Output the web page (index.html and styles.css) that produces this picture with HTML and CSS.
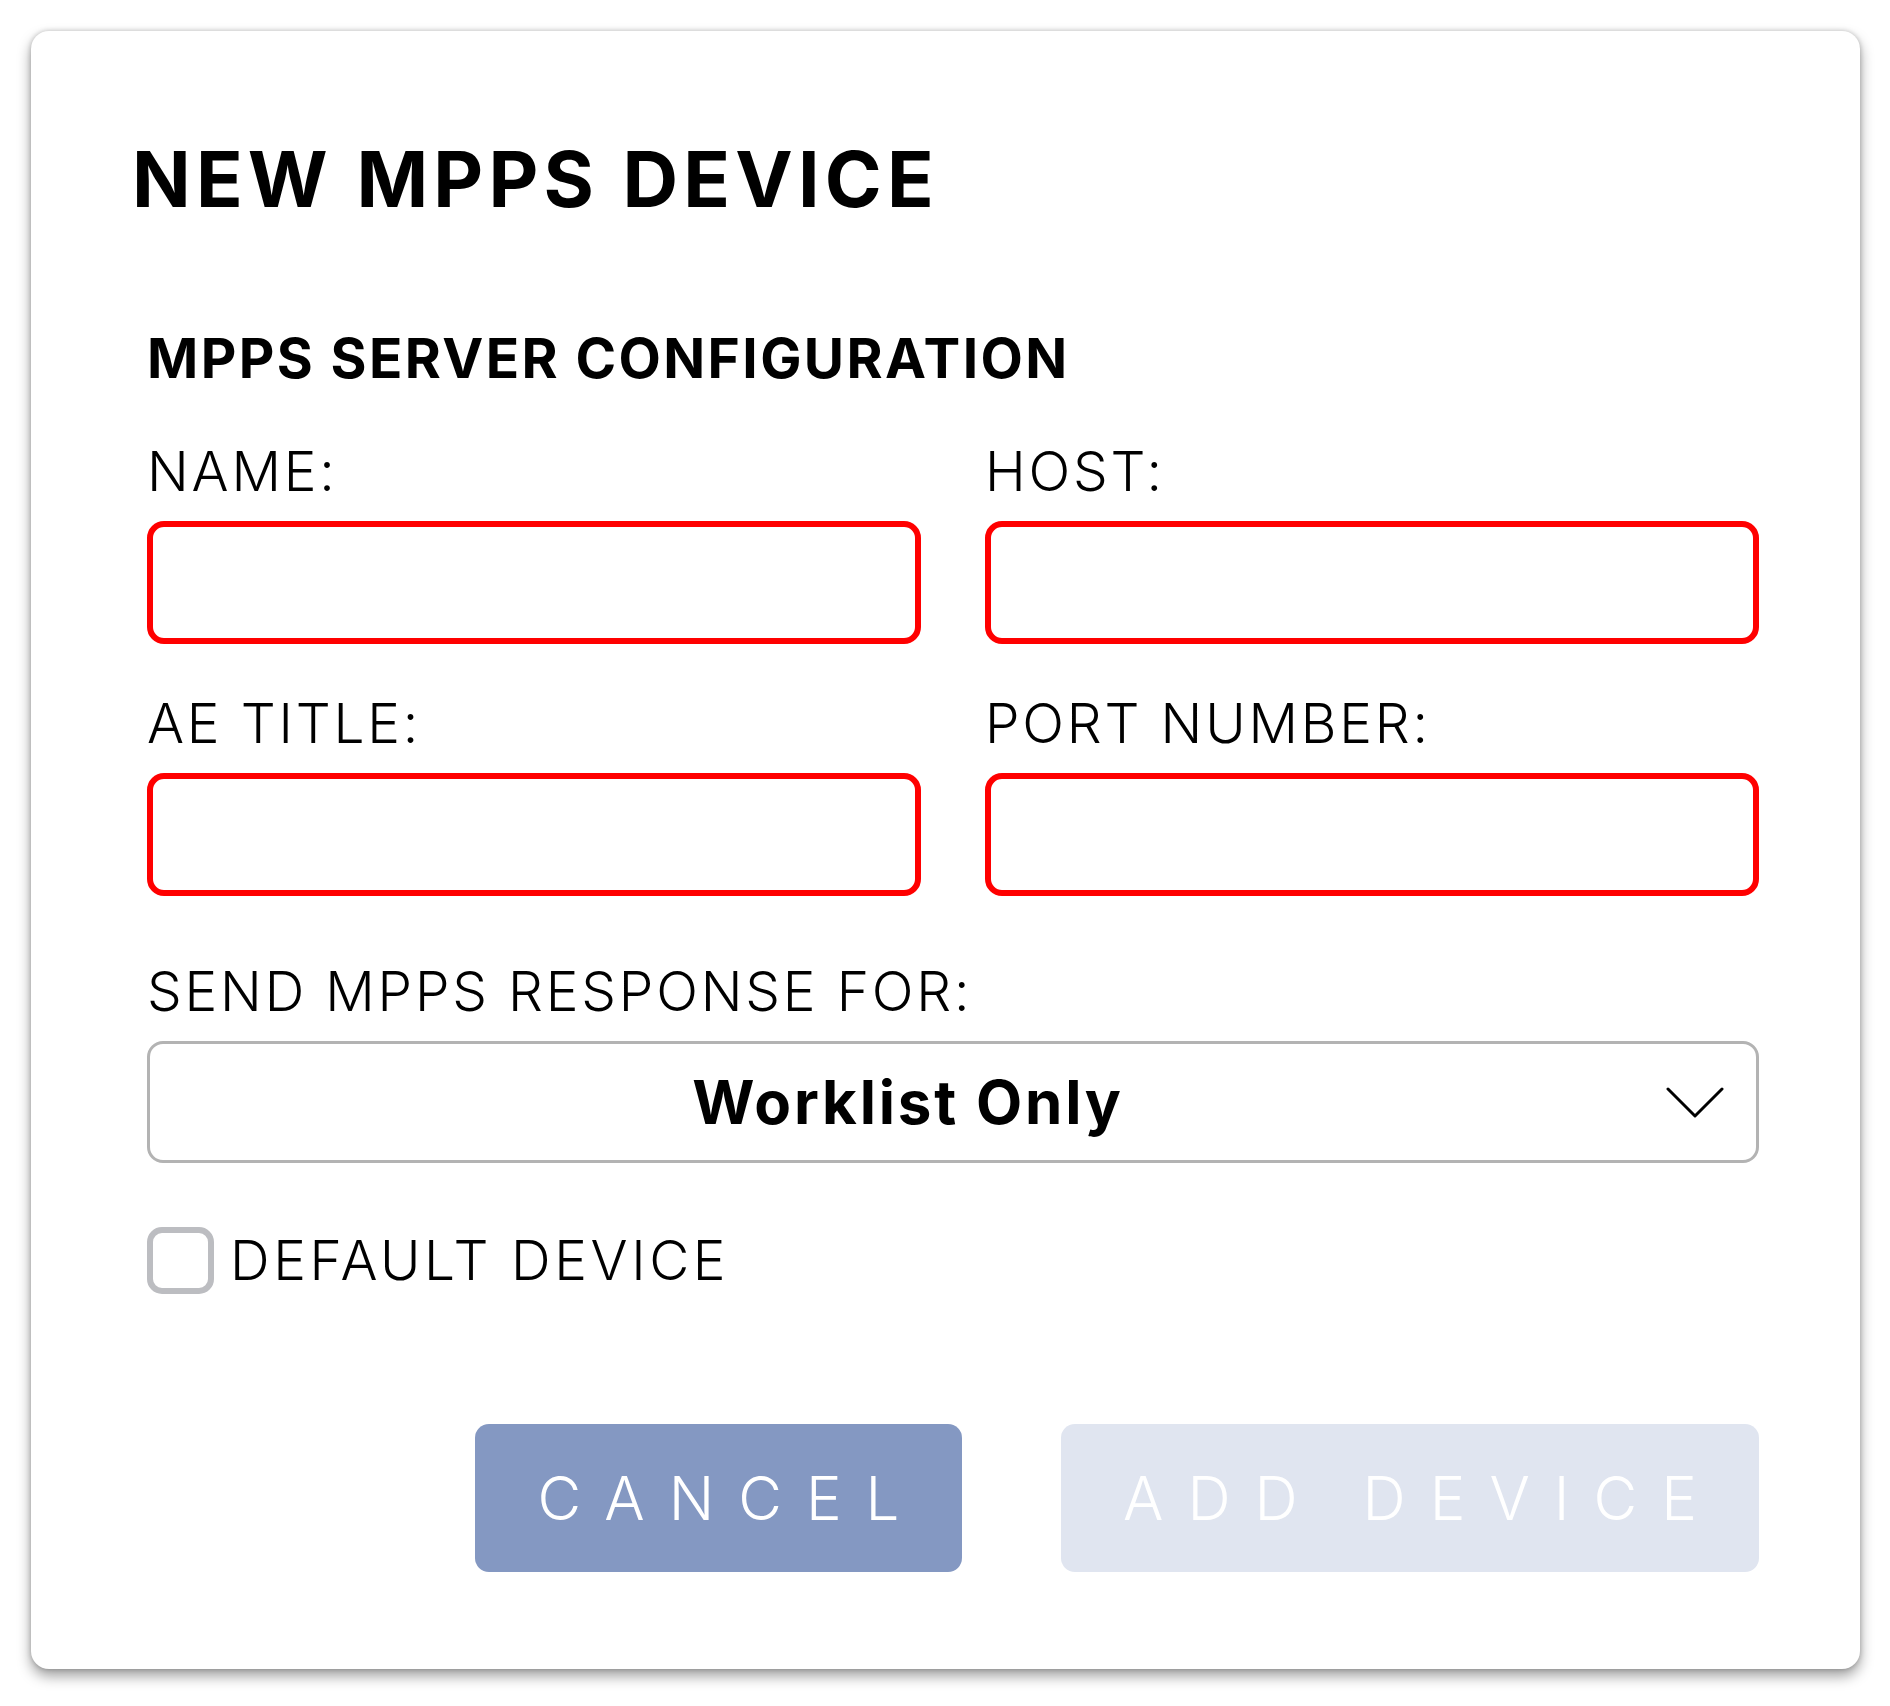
FILE: index.html
```html
<!DOCTYPE html>
<html lang="en">
<head>
<meta charset="utf-8">
<title>New MPPS Device</title>
<link rel="stylesheet" href="styles.css">
</head>
<body>
<div class="dialog">
  <h1 class="title">NEW MPPS DEVICE</h1>
  <section class="form">
    <h2 class="section-title">MPPS SERVER CONFIGURATION</h2>
    <div class="grid">
      <div class="field">
        <label class="label" for="name">NAME:</label>
        <input class="text-input" id="name" type="text">
      </div>
      <div class="field">
        <label class="label" for="host">HOST:</label>
        <input class="text-input" id="host" type="text">
      </div>
      <div class="field">
        <label class="label" for="ae">AE TITLE:</label>
        <input class="text-input" id="ae" type="text">
      </div>
      <div class="field">
        <label class="label" for="port">PORT NUMBER:</label>
        <input class="text-input" id="port" type="text">
      </div>
    </div>
    <div class="field field-wide">
      <div class="label">SEND MPPS RESPONSE FOR:</div>
      <div class="select">
        <span class="select-value">Worklist Only</span>
        <svg class="chevron" width="58" height="31" viewBox="0 0 58 31" aria-hidden="true">
          <polyline points="2,2 29,29 56,2" fill="none" stroke="#000" stroke-width="3" stroke-linecap="round" stroke-linejoin="round"/>
        </svg>
      </div>
    </div>
    <label class="check">
      <span class="check-box"></span>
      <span class="check-text">DEFAULT DEVICE</span>
    </label>
    <div class="actions">
      <button class="btn btn-cancel" type="button">CANCEL</button>
      <button class="btn btn-add" type="button" disabled>ADD DEVICE</button>
    </div>
  </section>
</div>
</body>
</html>
```
FILE: styles.css
```css
* { box-sizing: border-box; }

html, body {
  margin: 0;
  padding: 0;
  background: #ffffff;
}

body {
  font-family: Inter, "Liberation Sans", sans-serif;
  color: #000;
  width: 1890px;
  height: 1706px;
  overflow: hidden;
}

.dialog {
  margin: 31px 0 0 31px;
  width: 1829px;
  height: 1638px;
  background: #fff;
  border-radius: 18px;
  box-shadow: 0 7px 14px rgba(0, 0, 0, 0.38), 0 0 5px rgba(0, 0, 0, 0.22);
  padding: 110px 101px 0 116px;
}

.title {
  margin: 0 0 0 -15px;
  font-size: 77px;
  line-height: 77px;
  font-weight: 700;
  letter-spacing: 5.2px;
}

.form {
  display: flex;
  flex-direction: column;
}

.section-title {
  margin: 113px 0 0 0;
  font-size: 55px;
  line-height: 55px;
  font-weight: 700;
  letter-spacing: 2.4px;
}

.grid {
  display: grid;
  grid-template-columns: 1fr 1fr;
  column-gap: 64px;
  row-gap: 52px;
  margin-top: 58px;
}

.field {
  display: flex;
  flex-direction: column;
}

.field-wide {
  margin-top: 68px;
}

.label {
  font-size: 55px;
  line-height: 55px;
  font-weight: 300;
  letter-spacing: 2.8px;
  margin-bottom: 22px;
}

.text-input {
  height: 123px;
  border: 6px solid #ff0000;
  border-radius: 17px;
  background: #fff;
  outline: none;
  font-size: 40px;
  font-family: inherit;
  padding: 0 20px;
}

.select {
  height: 122px;
  border: 3px solid #b3b3b3;
  border-radius: 16px;
  display: flex;
  align-items: center;
  padding-right: 32px;
}

.select-value {
  flex: 1;
  text-align: center;
  font-size: 60px;
  font-weight: 700;
  letter-spacing: 2.8px;
}

.chevron {
  display: block;
}

.check {
  margin-top: 64px;
  display: flex;
  align-items: center;
  gap: 16px;
}

.check-box {
  width: 67px;
  height: 67px;
  border: 6px solid #bcbdc1;
  border-radius: 15px;
  flex-shrink: 0;
}

.check-text {
  font-size: 55px;
  line-height: 55px;
  font-weight: 300;
  letter-spacing: 3.6px;
}

.actions {
  margin-top: 130px;
  display: flex;
  justify-content: flex-end;
  gap: 99px;
}

.btn {
  height: 148px;
  border: none;
  border-radius: 14px;
  font-family: inherit;
  font-size: 60px;
  font-weight: 300;
  letter-spacing: 24px;
  padding: 0 0 0 24px;
  color: #fff;
}

.btn-cancel {
  width: 487px;
  background: #8498c2;
}

.btn-add {
  width: 698px;
  background: #e0e5f0;
}
```
